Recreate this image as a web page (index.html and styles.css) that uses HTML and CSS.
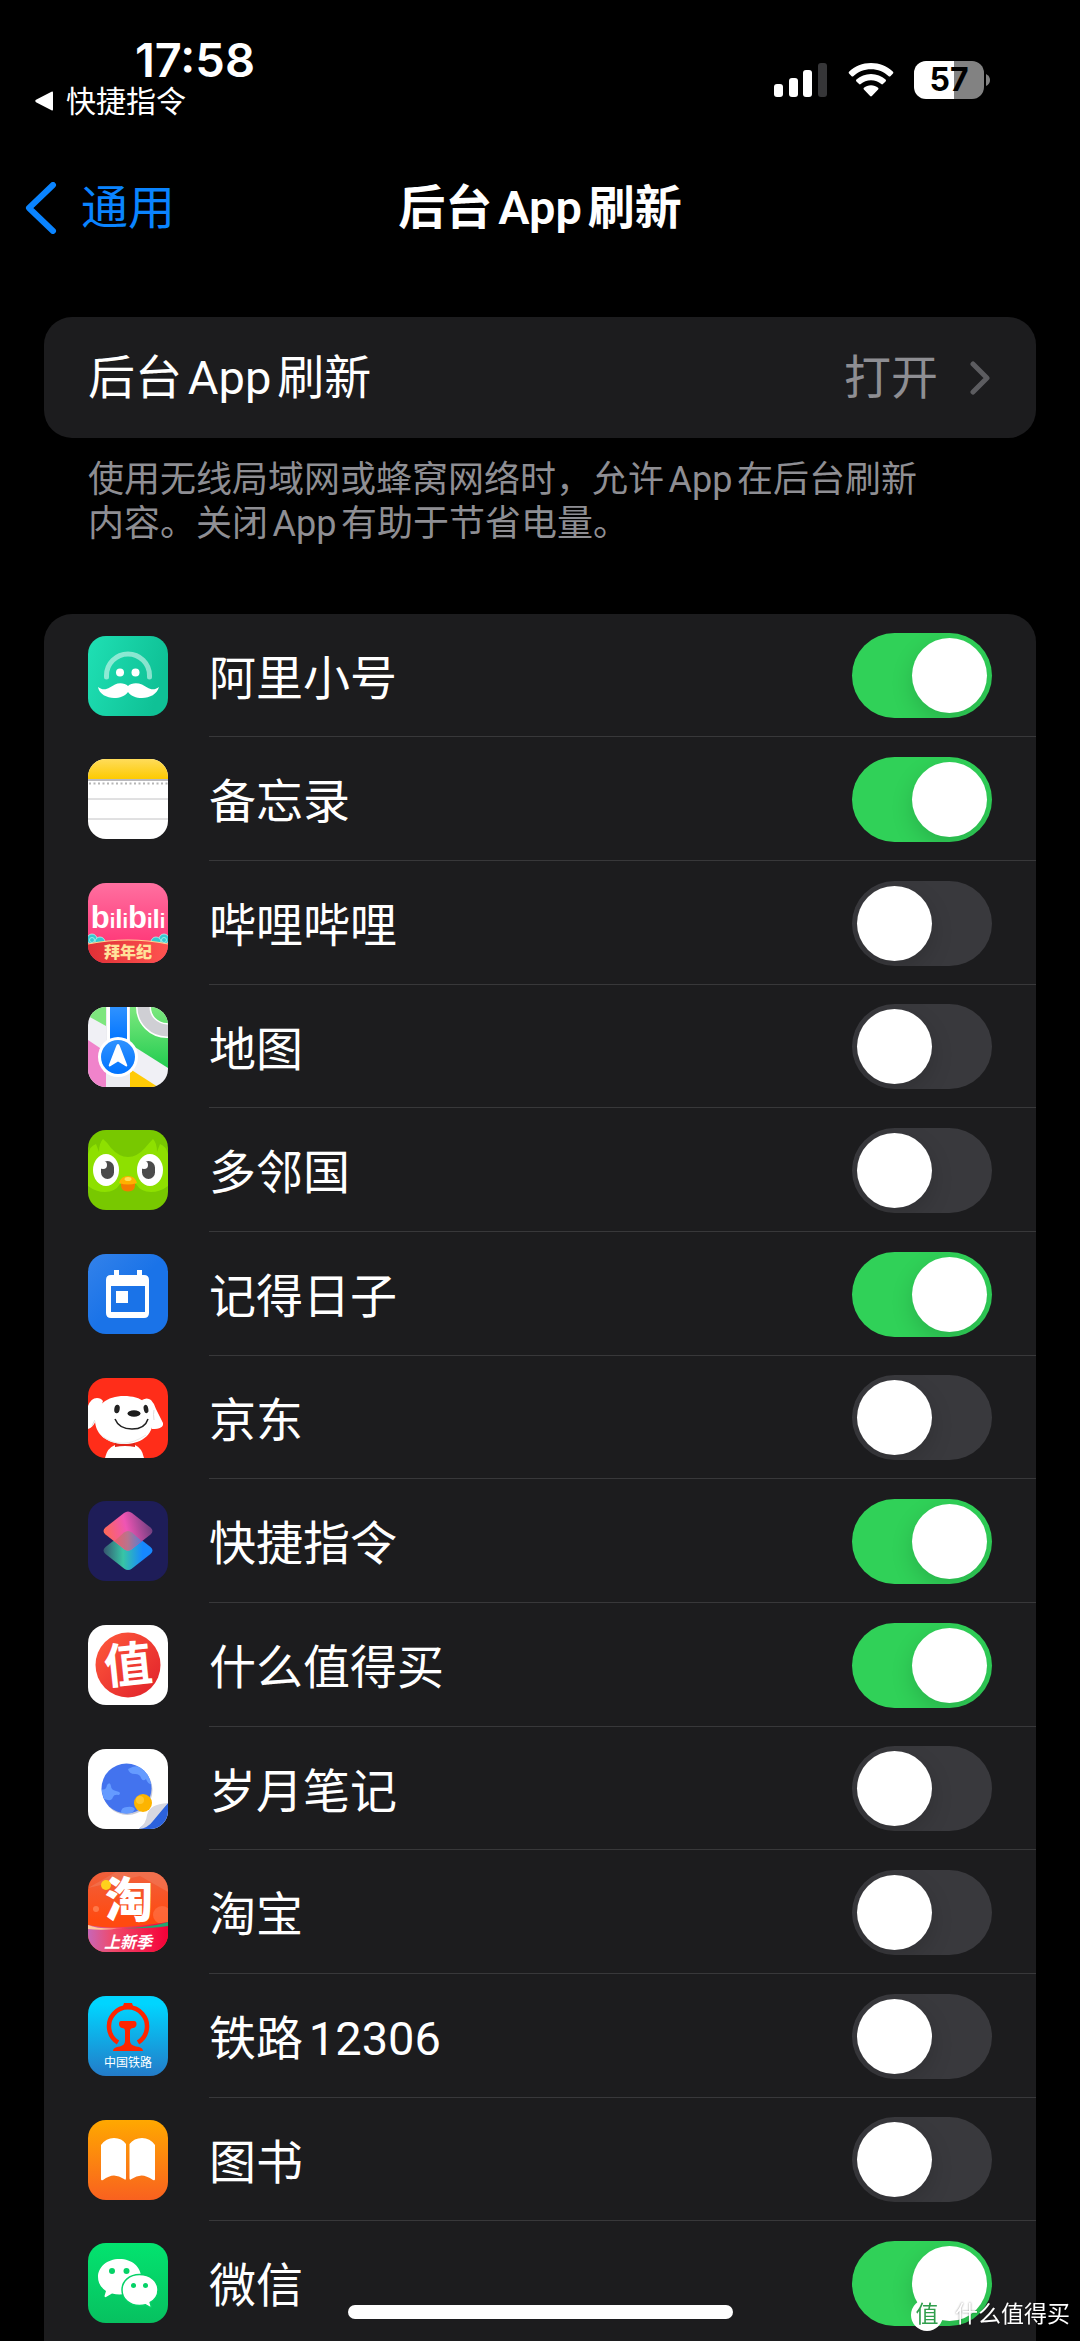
FILE: index.html
```html
<!DOCTYPE html>
<html lang="zh-CN">
<head>
    <meta charset="UTF-8">
    <meta name="viewport" content="width=device-width, initial-scale=1.0">
    <title>后台App刷新</title>
    <link rel="stylesheet" href="styles.css">
</head>
<body>

  <header class="status-bar">
    <div class="status-left">
      <span class="time">17:58</span>
      <a class="return-link" href="#">
        <svg width="20" height="20" viewBox="0 0 20 20" fill="#fff"><path d="M18 1.5v17q0 1.500-1.500.8L1 11.200q-1.500-1.200 0-2.400L16.500.7Q18 0 18 1.500z"/></svg>
        <span>快捷指令</span>
      </a>
    </div>
    <div class="status-right">
      <svg width="54" height="36" viewBox="0 0 54 36" fill="#fff">
        <rect x="0" y="22" width="9" height="13" rx="3"/>
        <rect x="15" y="16" width="9" height="19" rx="3"/>
        <rect x="29" y="8" width="9" height="27" rx="3"/>
        <rect x="44" y="1" width="9" height="34" rx="3" fill="#363638"/>
      </svg>
      <svg width="46" height="36" viewBox="0 0 46 36" fill="#fff">
        <path d="M23 1C14.500 1 6.800 4.300 1 9.700q-.8.900 0 1.800l2.600 2.700q.8.800 1.700 0C10 9.800 16.200 7.200 23 7.200s13 2.600 17.700 7q.9.800 1.700 0l2.600-2.700q.8-.9 0-1.800C39.200 4.300 31.500 1 23 1z"/>
        <path d="M23 12c-5.600 0-10.700 2.100-14.600 5.600q-.9.900 0 1.800l2.700 2.700q.8.700 1.600 0c2.700-2.400 6.300-3.900 10.300-3.900s7.600 1.500 10.300 3.900q.8.700 1.600 0l2.700-2.700q.9-.9 0-1.800C33.700 14.100 28.600 12 23 12z"/>
        <path d="M23 23.200c-2.700 0-5.200 1-7.100 2.600q-.9.900 0 1.800l6.200 6.500q.9.900 1.800 0l6.200-6.500q.9-.9 0-1.800c-1.900-1.600-4.400-2.600-7.100-2.600z"/>
      </svg>
      <svg class="battery" width="76" height="38" viewBox="0 0 76 38">
        <defs>
          <linearGradient id="charge"><stop offset="57%" stop-color="#fff"/><stop offset="57%" stop-color="#828282"/></linearGradient>
        </defs>
        <rect width="70" height="38" rx="12" fill="url(#charge)"/>
        <path d="M72 13q4 2 4 6t-4 6z" fill="#828282"/>
        <text x="35" y="30" text-anchor="middle">57</text>
      </svg>
    </div>
  </header>

  <nav class="nav-bar">
    <a class="back" href="#">
      <svg width="32" height="52" viewBox="0 0 32 52" fill="none" stroke="#0a84ff" stroke-width="6" stroke-linecap="round" stroke-linejoin="round"><path d="M28 3L4 26l24 23"/></svg>
      <span>通用</span>
    </a>
    <h1 class="title">后台App刷新</h1>
  </nav>

  <main class="content">
    <a class="card refresh-row" href="#">
      <span>后台App刷新</span>
      <span class="value">打开</span>
      <svg width="20" height="34" viewBox="0 0 20 34" fill="none" stroke="#5c5c60" stroke-width="5" stroke-linecap="round" stroke-linejoin="round"><path d="M3 3l14 14L3 31"/></svg>
    </a>
    <p class="note">使用无线局域网或蜂窝网络时，允许App在后台刷新内容。关闭App有助于节省电量。</p>

    <ul class="card app-list">
      <li class="item">
        <svg class="icon" viewBox="0 0 80 80">
          <defs><linearGradient id="ali" x2="1" y2=".3"><stop stop-color="#1fe0b4"/><stop offset="1" stop-color="#0fc196"/></linearGradient></defs>
          <rect width="80" height="80" fill="url(#ali)"/>
          <path d="M18.500 41v-1.500a21.500 21.500 0 0 1 43 0V41" fill="none" stroke="#fff" stroke-opacity=".5" stroke-width="5" stroke-linecap="round"/>
          <circle cx="32" cy="36.500" r="4" fill="#fff"/><circle cx="47.500" cy="36.500" r="4" fill="#fff"/>
          <path d="M40 50c-3-3-9-3.500-13-1.500-5 2.500-10 8-17 2.500 1 7 9 11 16 11 6 0 11-2 14-6 3 4 8 6 14 6 8 0 15-4 17-11-7 5.500-12 0-17-2.500-5-2-11-1.500-14 1.500z" fill="#fff"/>
        </svg>
        <label for="app1">阿里小号</label>
        <input id="app1" class="switch" type="checkbox" checked>
      </li>
      <li class="item">
        <svg class="icon" viewBox="0 0 80 80">
          <defs><linearGradient id="memo" x2="0" y2="1"><stop stop-color="#ffdc5a"/><stop offset="1" stop-color="#fdca00"/></linearGradient></defs>
          <rect width="80" height="80" fill="#fff"/>
          <rect width="80" height="20" fill="url(#memo)"/>
          <rect y="20" width="80" height="2" fill="#b9b9bd"/>
          <path d="M1 24.500h80" stroke="#b5b5b5" stroke-width="2" stroke-dasharray="2 2.500"/>
          <path d="M0 40h80M0 60h80" stroke="#c2c2c4"/>
        </svg>
        <label for="app2">备忘录</label>
        <input id="app2" class="switch" type="checkbox" checked>
      </li>
      <li class="item">
        <svg class="icon" viewBox="0 0 80 80">
          <defs>
            <linearGradient id="bili" x2="0" y2="1"><stop stop-color="#ff70a0"/><stop offset=".7" stop-color="#ff3d7c"/></linearGradient>
            <linearGradient id="banner"><stop stop-color="#df3036"/><stop offset="1" stop-color="#ff5350"/></linearGradient>
          </defs>
          <rect width="80" height="80" fill="url(#bili)"/>
          <g fill="#35c9d0" stroke="#b9f3ec" stroke-width=".8">
            <circle cx="4" cy="56" r="5"/><circle cx="12" cy="59" r="5"/><circle cx="76" cy="56" r="5"/><circle cx="68" cy="59" r="5"/>
            <circle cx="4" cy="57" r="2.500"/><circle cx="76" cy="57" r="2.500"/>
          </g>
          <path d="M0 61q40-8 80 0v19H0z" fill="url(#banner)"/>
          <path d="M0 61q40-8 80 0" fill="none" stroke="#ffd590" stroke-width="1.200"/>
          <text class="bili-text" x="40" y="45" text-anchor="middle"><tspan class="b">b</tspan>i<tspan class="l">l</tspan>i<tspan class="b">b</tspan>i<tspan class="l">l</tspan>i</text>
          <text class="bili-sub" x="40" y="75" text-anchor="middle">拜年纪</text>
        </svg>
        <label for="app3">哔哩哔哩</label>
        <input id="app3" class="switch" type="checkbox">
      </li>
      <li class="item">
        <svg class="icon" viewBox="0 0 80 80">
          <defs>
            <linearGradient id="land" x2="0" y2="1"><stop stop-color="#7de87e"/><stop offset="1" stop-color="#22cc50"/></linearGradient>
            <linearGradient id="road" x2="0" y2="1"><stop stop-color="#2f92ff"/><stop offset="1" stop-color="#0073ff"/></linearGradient>
          </defs>
          <rect width="80" height="80" fill="#f0f0f5"/>
          <path d="M0 0h18v19L0 9z" fill="#7ee67e"/>
          <path d="M42 0h38v61L42 37z" fill="url(#land)"/>
          <circle cx="79" cy="0" r="23.500" fill="none" stroke="#fff" stroke-width="15"/>
          <circle cx="79" cy="0" r="23.500" fill="none" stroke="#cfcfd4" stroke-width="12"/>
          <path d="M0 33l18 12v35H0z" fill="#f083cb"/>
          <path d="M42 62l28 18H42z" fill="#ffca05"/>
          <path d="M18 0h24v80H18z" fill="#ececf1"/>
          <path d="M19 0h3v35h-3zM39 0h2v35h-2z" fill="#fff"/>
          <path d="M22 0h17v36H22z" fill="url(#road)"/>
          <circle cx="30" cy="50" r="20" fill="#fff"/><circle cx="30" cy="50" r="17" fill="url(#road)"/>
          <path d="M30 37q1.200 0 1.800 2L39.200 58q.5 2-1.500 1.200L30 54.500l-7.700 4.700q-2 .8-1.500-1.200L28.200 39q.6-2 1.800-2z" fill="#fff"/>
        </svg>
        <label for="app4">地图</label>
        <input id="app4" class="switch" type="checkbox">
      </li>
      <li class="item">
        <svg class="icon" viewBox="0 0 80 80">
          <rect width="80" height="80" fill="#78c800"/>
          <path d="M0 24q2-8 8-10l3 8q0-9 4-13 5 4 8 9 8 9 17 9t17-9q4-5 8-9 4 4 4 13l3-8q6 2 8 10v32q-8 6-17 6-10 0-15-8H32q-5 8-15 8-9 0-17-6z" fill="#8ee000"/>
          <ellipse cx="18" cy="40" rx="13" ry="16" fill="#fff"/><ellipse cx="62" cy="40" rx="13" ry="16" fill="#fff"/>
          <rect x="13" y="31" width="13" height="18" rx="6.500" fill="#4b4b4b"/><rect x="54" y="31" width="13" height="18" rx="6.500" fill="#4b4b4b"/>
          <circle cx="15" cy="35" r="4" fill="#fff"/><circle cx="56" cy="35" r="4" fill="#fff"/>
          <path d="M33 53h14v2q0 6.500-7 6.500T33 55z" fill="#f47b00"/>
          <path d="M31 53q2-7 9-7t9 7q-9 3-18 0z" fill="#ffb100"/>
          <ellipse cx="40" cy="49" rx="3.500" ry="2" fill="#ffdf57"/>
        </svg>
        <label for="app5">多邻国</label>
        <input id="app5" class="switch" type="checkbox">
      </li>
      <li class="item">
        <svg class="icon" viewBox="0 0 80 80">
          <defs><linearGradient id="day" x2="1" y2="1"><stop stop-color="#3382ea"/><stop offset=".5" stop-color="#1a73e8"/></linearGradient></defs>
          <rect width="80" height="80" fill="url(#day)"/>
          <path d="M26 16h5v5h18v-5h5v5h2q5 0 5 5v33q0 5-5 5H23q-5 0-5-5V26q0-5 5-5h3zM23 32v26h34V32z" fill="#fff" fill-rule="evenodd"/>
          <rect x="28" y="37" width="12" height="12" fill="#fff"/>
        </svg>
        <label for="app6">记得日子</label>
        <input id="app6" class="switch" type="checkbox" checked>
      </li>
      <li class="item">
        <svg class="icon" viewBox="0 0 80 80">
          <rect width="80" height="80" fill="#ff2d19"/>
          <path d="M0 28q3-8 9-8 4 0 6 3L8 42q-3 8-8 9zM54 22q5-3 9 0 3 3 5 9l7 14q1 6-11 6z" fill="#fff"/>
          <path d="M7 42q-2 3-3 6M66 32q-1 4 0 10" fill="none" stroke="#ddd"/>
          <path d="M17 80q2-10 10-13h20q7 3 9 13z" fill="#fff"/>
          <path d="M27 65h20v4q-10-2-20 0z" fill="#e02418"/>
          <path d="M36 18c17 0 29 8 29 24S52 66 36 66 7 57 7 42s12-24 29-24z" fill="#fff"/>
          <path d="M14 58q20 15 44-1" fill="none" stroke="#e9e9e9" stroke-width="1"/>
          <ellipse cx="29" cy="31" rx="2.700" ry="4.200" fill="#222" transform="rotate(10 29 31)"/>
          <ellipse cx="58" cy="31" rx="2.300" ry="4.200" fill="#222" transform="rotate(-12 58 31)"/>
          <ellipse cx="46" cy="35.500" rx="6.500" ry="3.200" fill="#1c1c1c"/>
          <path d="M27 41q4 10 17 10t16-10" fill="none" stroke="#222" stroke-width="1.500"/>
        </svg>
        <label for="app7">京东</label>
        <input id="app7" class="switch" type="checkbox">
      </li>
      <li class="item">
        <svg class="icon" viewBox="0 0 80 80">
          <defs>
            <linearGradient id="top" x1="0" y1=".7" x2="1" y2=".5"><stop stop-color="#ff6a4d"/><stop offset=".5" stop-color="#ef55b4"/><stop offset="1" stop-color="#713f80"/></linearGradient>
            <linearGradient id="bottom" x1="0" y1=".4" x2="1" y2=".4"><stop stop-color="#36566f"/><stop offset=".4" stop-color="#38c5a5"/><stop offset=".8" stop-color="#1688ff"/></linearGradient>
            <linearGradient id="mix"><stop stop-color="#e8606a"/><stop offset=".5" stop-color="#b8748e"/><stop offset="1" stop-color="#5c7bd0"/></linearGradient>
          </defs>
          <rect width="80" height="80" fill="#1e1d58"/>
          <path d="M36 31.500q4-3 8 0l18.500 14.500q4 3.500 0 7L44 67.500q-4 3-8 0L17.500 53q-4-3.500 0-7z" fill="url(#bottom)"/>
          <path d="M36 12q4-3 8 0l18.500 14.500q4 3.500 0 7L44 48q-4 3-8 0L17.500 33.500q-4-3.500 0-7z" fill="url(#top)"/>
          <path d="M36 31.500q4-3 8 0l9.500 8.500L44 48q-4 3-8 0l-9.500-8z" fill="url(#mix)"/>
        </svg>
        <label for="app8">快捷指令</label>
        <input id="app8" class="switch" type="checkbox" checked>
      </li>
      <li class="item">
        <svg class="icon" viewBox="0 0 80 80">
          <defs><linearGradient id="zhi" x2="1" y2="1"><stop stop-color="#ff5a3c"/><stop offset="1" stop-color="#e0202a"/></linearGradient></defs>
          <rect width="80" height="80" fill="#fff"/>
          <circle cx="40" cy="40" r="32.500" fill="url(#zhi)"/>
          <text class="zhi-text" x="40" y="57" text-anchor="middle" transform="rotate(-6 40 40)">值</text>
        </svg>
        <label for="app9">什么值得买</label>
        <input id="app9" class="switch" type="checkbox" checked>
      </li>
      <li class="item">
        <svg class="icon" viewBox="0 0 80 80">
          <defs><clipPath id="globe"><circle cx="38.500" cy="39.500" r="25"/></clipPath></defs>
          <rect width="80" height="80" fill="#fff"/>
          <circle cx="39.500" cy="41" r="25" fill="#c9cbd8"/>
          <circle cx="38.500" cy="39.500" r="25" fill="#4373ee"/>
          <g clip-path="url(#globe)" fill="#659bff">
            <path d="M40 20q10-6 20 0l6 16q-6 0-8-6-3 3-5-1-1-4-6-4-6 0-7-5z"/>
            <path d="M13 40q5 2 6-4 3-4 4 1 0 4 5 5 6 1 3 4-5-1-6 2-1 5-9 2z"/>
            <path d="M33 66q-1-8 6-8 6-1 8 2l-4 6z"/>
          </g>
          <circle cx="55" cy="54" r="9" fill="#fdb400"/><circle cx="52" cy="51" r="4" fill="#ffc72e"/>
          <path d="M80 54L51 80h29z" fill="#2b62dd"/>
          <path d="M80 54q-19 1-21 12-1 9-8 14 9-1 14-8z" fill="#d6d7e0"/>
        </svg>
        <label for="app10">岁月笔记</label>
        <input id="app10" class="switch" type="checkbox">
      </li>
      <li class="item">
        <svg class="icon" viewBox="0 0 80 80">
          <defs>
            <linearGradient id="tao" x2="0" y2="1"><stop stop-color="#f0603c"/><stop offset=".6" stop-color="#ff4a10"/></linearGradient>
            <linearGradient id="season"><stop stop-color="#c766b8"/><stop offset=".3" stop-color="#ef4a6c"/><stop offset="1" stop-color="#f50038"/></linearGradient>
          </defs>
          <rect width="80" height="80" fill="url(#tao)"/>
          <path d="M0 16L28 0h52v20L52 4z" fill="#f08060" opacity=".5"/>
          <circle cx="74" cy="43" r="9" fill="#ff8058" opacity=".5"/><circle cx="8" cy="37" r="3" fill="#ff8a5c" opacity=".7"/>
          <path d="M0 53q25 6 80-3v30H0z" fill="url(#season)"/>
          <path d="M35 56q25 0 45-6v4q-20 3-45 2z" fill="#20a870"/>
          <path d="M0 53q12 5 35 3-20 3-35 1z" fill="#ffc89a"/>
          <text class="tao-text" x="41" y="45" text-anchor="middle">淘</text>
          <circle cx="18" cy="13" r="5" fill="#ffd21c"/>
          <text class="tao-sub" x="40" y="76" text-anchor="middle">上新季</text>
        </svg>
        <label for="app11">淘宝</label>
        <input id="app11" class="switch" type="checkbox">
      </li>
      <li class="item">
        <svg class="icon" viewBox="0 0 80 80">
          <defs><linearGradient id="rail" x2="0" y2="1"><stop offset=".1" stop-color="#00d5ff"/><stop offset="1" stop-color="#237bc8"/></linearGradient></defs>
          <rect width="80" height="80" fill="url(#rail)"/>
          <path d="M30 46.500a19 19 0 1 1 20 0" fill="none" stroke="#ff2500" stroke-width="4.500"/>
          <path d="M36 7h8l2 6H34zM33 25h13q2.500 0 2.500 3t-3 4q-3.500 0-3.500 3v10q0 4 6 5.500 7 .5 7 4.500H25q0-4 7-4.500 5-1.500 5-5.500V35q0-3-3-3-3-1-3-4t2-3z" fill="#ff2500"/>
          <text class="rail-text" x="40" y="71" text-anchor="middle">中国铁路</text>
        </svg>
        <label for="app12">铁路12306</label>
        <input id="app12" class="switch" type="checkbox">
      </li>
      <li class="item">
        <svg class="icon" viewBox="0 0 80 80">
          <defs><linearGradient id="book" x2="0" y2="1"><stop stop-color="#ffa800"/><stop offset="1" stop-color="#f9611f"/></linearGradient></defs>
          <rect width="80" height="80" fill="url(#book)"/>
          <path d="M13 25q5-7 13-7t12 6v34q0 3-2 1-5-3.500-10-3.500T15 60q-2 1-2-1zM67 25q-5-7-13-7t-12.500 6v34q0 3 2 1 5-3.500 10-3.500T65 60q2 1 2-1z" fill="#fff"/>
        </svg>
        <label for="app13">图书</label>
        <input id="app13" class="switch" type="checkbox">
      </li>
      <li class="item">
        <svg class="icon" viewBox="0 0 80 80">
          <defs><linearGradient id="chat" x2="0" y2="1"><stop stop-color="#03e36f"/><stop offset="1" stop-color="#07c160"/></linearGradient></defs>
          <rect width="80" height="80" fill="url(#chat)"/>
          <path d="M31.500 16C19 16 10 24 10 34q0 8.500 8 14l-1.500 5q0 1.500 1.500 1l6-3.500q4 1 7.500 1C44 51.500 53 44 53 34s-9-18-21.500-18z" fill="#fff"/>
          <path d="M51.500 31.500C41.500 31.500 34 38 34 47s7.500 15.500 17.500 15.500q3.500 0 6-.7l4.500 2.500q1.500.5 1.200-1l-1-3.800Q70 55 70 47c0-9-8-15.500-18.500-15.500z" fill="#fff" stroke="#05d267" stroke-width="1.500"/>
          <g fill="#05d267"><circle cx="24" cy="28" r="3"/><circle cx="38.500" cy="28" r="3"/><circle cx="45.500" cy="42.500" r="2.500"/><circle cx="57.500" cy="42.500" r="2.500"/></g>
        </svg>
        <label for="app14">微信</label>
        <input id="app14" class="switch" type="checkbox" checked>
      </li>
    </ul>
  </main>

  <div class="home-indicator"></div>
  <div class="watermark"><span class="mark">值</span><span>什么值得买</span></div>

</body>
</html>
```
FILE: styles.css
```css
* {
    margin: 0;
    padding: 0;
    box-sizing: border-box;
    text-autospace: normal;
}
body {
    height: 100vh;
    overflow: hidden;
    background: #000;
    color: #fff;
    font-family: Roboto, 'Noto Sans CJK SC', sans-serif;
    font-size: 47px;
    line-height: 64px;
}
a {
    color: inherit;
    text-decoration: none;
}
svg {
    display: block;
    flex-shrink: 0;
}

/* status bar */
.status-bar {
    display: flex;
    justify-content: space-between;
    height: 144px;
    padding: 36px 90px 0 35px;
    font-family: Inter, 'Noto Sans CJK SC', sans-serif;
}
.time {
    display: block;
    padding-left: 100px;
    font-size: 47px;
    font-weight: 600;
    line-height: 48px;
}
.return-link {
    display: flex;
    align-items: center;
    gap: 11px;
    font-size: 30px;
    line-height: 34px;
}
.status-right {
    display: flex;
    align-items: center;
    gap: 20px;
    height: 88px;
}
.battery text {
    font-size: 32px;
    font-weight: 700;
}

/* navigation */
.nav-bar {
    display: grid;
    grid-template-columns: 1fr auto 1fr;
    align-items: center;
    height: 128px;
    padding: 0 25px;
}
.back {
    display: flex;
    align-items: center;
    gap: 24px;
    color: #0a84ff;
}
.title {
    font-size: 47px;
    font-weight: 600;
}

/* cards */
.content {
    padding: 45px 44px 0;
}
.card {
    background: #1c1c1e;
    border-radius: 28px;
}
.refresh-row {
    display: flex;
    align-items: center;
    height: 121px;
    padding: 0 46px 0 44px;
}
.refresh-row .value {
    margin-left: auto;
    margin-right: 32px;
    color: #8e8e93;
}
.note {
    padding: 20px 88px 68px 44px;
    color: #8e8e93;
    font-size: 36px;
    line-height: 44px;
}

/* app list */
.app-list {
    list-style: none;
    border-radius: 28px 28px 0 0;
}
.item {
    display: flex;
    align-items: center;
    height: 124px;
    padding: 0 44px;
    background: linear-gradient(#38383a, #38383a) 165px bottom / 100% 1px no-repeat;
}
.item:nth-child(3n + 1) {
    height: 123px;
}
.item label {
    flex: 1;
    padding: 6px 0 0 41px;
}
.icon {
    width: 80px;
    height: 80px;
    border-radius: 18px;
}
.icon text {
    fill: #fff;
    font-family: 'Noto Sans CJK SC', sans-serif;
    font-weight: 700;
}
.icon .bili-text {
    font-family: 'Liberation Sans', sans-serif;
    font-size: 20px;
}
.bili-text .b {
    font-size: 31px;
}
.bili-text .l {
    font-size: 26px;
}
.icon .bili-sub {
    fill: #ffe29a;
    font-size: 16px;
    font-weight: 900;
}
.icon .zhi-text {
    font-size: 48px;
}
.icon .tao-text {
    font-size: 48px;
    font-weight: 900;
}
.icon .tao-sub {
    font-size: 16px;
    font-style: italic;
}
.icon .rail-text {
    font-size: 12px;
    font-weight: 400;
}
.switch {
    appearance: none;
    width: 140px;
    height: 85px;
    padding: 5px;
    border-radius: 43px;
    background: #39393d;
    overflow: hidden;
}
.switch::before {
    content: '';
    display: block;
    width: 75px;
    height: 75px;
    border-radius: 50%;
    background: #fff;
    box-shadow: 0 8px 22px rgba(0, 0, 0, 0.15);
}
.switch:checked {
    background: #30d158;
}
.switch:checked::before {
    margin-left: auto;
}

/* overlays */
.home-indicator {
    position: fixed;
    bottom: 22px;
    left: 50%;
    width: 385px;
    height: 14px;
    margin-left: -192px;
    border-radius: 7px;
    background: #fff;
}
.watermark {
    position: fixed;
    right: 10px;
    bottom: 10px;
    display: flex;
    align-items: center;
    gap: 12px;
    font-size: 23px;
    line-height: 32px;
    text-shadow: 0 0 2px rgba(0, 0, 0, 0.5);
}
.watermark .mark {
    width: 32px;
    height: 32px;
    border-radius: 50%;
    background: #fff;
    color: #2f9e4c;
    text-align: center;
    text-shadow: none;
}
```
